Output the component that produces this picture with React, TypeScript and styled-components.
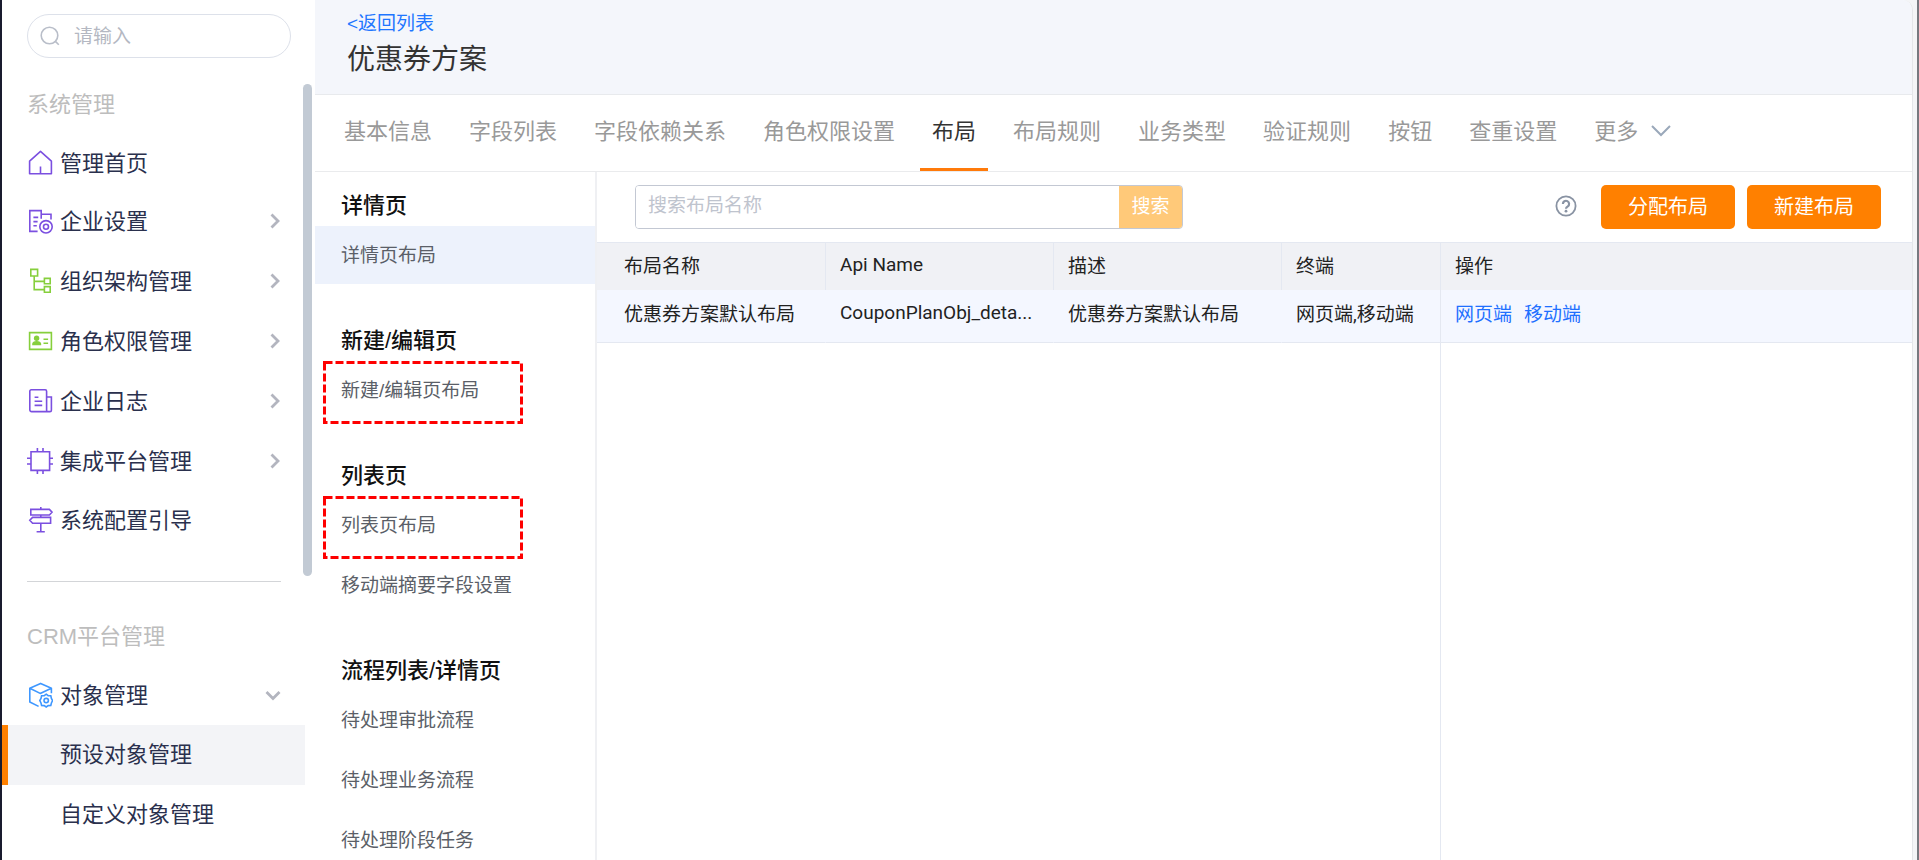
import React from "react";
import styled, { createGlobalStyle } from "styled-components";

const cjk = '"Noto Sans CJK SC", sans-serif';

const GlobalStyle = createGlobalStyle`
  *, *::before, *::after { box-sizing: border-box; }
  body { margin: 0; background: #fff; font-family: "Liberation Sans", ${cjk}; font-weight: 400; color: #333; }
  button, input { font: inherit; color: inherit; margin: 0; }
  button { border: 0; padding: 0; background: none; cursor: pointer; }
  a { text-decoration: none; color: inherit; }
  h1, h2, p, ul { margin: 0; padding: 0; font-weight: inherit; list-style: none; }
`;

const Page = styled.div`
  display: flex;
  min-height: 100vh;
  overflow: hidden;
  border-left: 2px solid #191b2e;
  border-right: 2px solid #77797f;
  background: #f4f5f7;
`;

const Sidebar = styled.aside`
  position: relative;
  flex: 0 0 313px;
  width: 313px;
  min-width: 0;
  padding-top: 14px;
  background: #fff;
`;

const ScrollThumb = styled.div`
  position: absolute;
  top: 84px;
  right: 3px;
  width: 9px;
  height: 492px;
  border-radius: 5px;
  background: #c2cad4;
`;

const SideSearch = styled.label`
  display: flex;
  align-items: center;
  gap: 14px;
  height: 44px;
  margin: 0 24px 0 25px;
  padding: 0 12px;
  border: 1px solid #dde1ea;
  border-radius: 22px;
  color: #b9bec9;

  svg { flex: none; }
  input {
    flex: 1;
    width: 100%;
    min-width: 0;
    border: 0;
    padding: 2px 0 0;
    outline: 0;
    background: none;
    font-size: 19px;
  }
  input::placeholder { color: #b4b8c2; opacity: 1; }
`;

const SideHeading = styled.h2<{ $top: number }>`
  margin-top: ${(p) => p.$top}px;
  padding-left: 25px;
  font-size: 22px;
  line-height: 30px;
  color: #bdbdbd;
`;

const SideList = styled.ul<{ $top: number }>`
  margin-top: ${(p) => p.$top}px;
  padding-right: 10px;
`;

const SideLink = styled.a<{ $plain?: boolean; $nested?: boolean; $active?: boolean }>`
  display: flex;
  align-items: center;
  gap: 7px;
  height: ${(p) => (p.$plain ? 57 : 60)}px;
  padding: 0 24px 0 ${(p) => (p.$nested ? 52 : 19)}px;
  border-left: 6px solid ${(p) => (p.$active ? "#ff8000" : "transparent")};
  background: ${(p) => (p.$active ? "#f3f4f7" : "none")};
  font-size: 22px;
  color: #2a304d;

  span { flex: 1; padding-bottom: ${(p) => (p.$nested ? 6 : 4)}px; }
`;

const Divider = styled.hr`
  height: 1px;
  margin: 33px 34px 0 25px;
  border: 0;
  background: #d3d5d8;
`;

const Main = styled.main`
  display: flex;
  flex: 1;
  flex-direction: column;
  min-width: 0;
  margin-right: 4px;
  border-right: 1px solid #e4e6e9;
  border-top-right-radius: 10px;
  background: #fff;
  overflow: hidden;
`;

const PageHeader = styled.header`
  height: 95px;
  padding: 11px 32px 0;
  border-bottom: 1px solid #e8eaed;
  background: #f4f6fb;
`;

const BackLink = styled.a`
  display: block;
  font-size: 19px;
  line-height: 26px;
  color: #1f76ff;
`;

const Title = styled.h1`
  font-size: 28px;
  line-height: 46px;
  color: #333;
`;

const Tabs = styled.nav`
  display: flex;
  gap: 13px;
  height: 77px;
  padding: 0 17px;
  border-bottom: 1px solid #eaebed;
`;

const Tab = styled.button<{ $active?: boolean }>`
  display: flex;
  align-items: center;
  gap: 13px;
  padding: 0 12px 6px;
  border-bottom: 3px solid ${(p) => (p.$active ? "#ff7a0a" : "transparent")};
  font-size: 22px;
  white-space: nowrap;
  color: ${(p) => (p.$active ? "#333" : "#999")};

  svg { margin-top: 4px; }
`;

const Body = styled.div`
  display: flex;
  flex: 1;
`;

const LayoutNav = styled.nav`
  display: flex;
  flex: 0 0 282px;
  flex-direction: column;
  gap: 39px;
  padding-top: 16px;
  border-right: 2px solid #eff0f3;
`;

const NavHeading = styled.h2`
  padding-left: 26px;
  padding-bottom: 2px;
  font-size: 22px;
  font-weight: 500;
  line-height: 36px;
  color: #111;
`;

const NavItems = styled.ul`
  display: flex;
  flex-direction: column;
  gap: 2px;
`;

const NavItem = styled.a<{ $active?: boolean }>`
  position: relative;
  display: flex;
  align-items: center;
  height: 58px;
  padding: 0 0 4px 26px;
  background: ${(p) => (p.$active ? "#edf2fc" : "none")};
  font-size: 19px;
  color: #5b5f68;
`;

const Marker = styled.svg`
  position: absolute;
  top: 0;
  left: 8px;
  width: 200px;
  height: 63px;
`;

const Content = styled.section`
  display: flex;
  flex: 1;
  flex-direction: column;
  min-width: 0;
`;

const Toolbar = styled.div`
  display: flex;
  align-items: center;
  gap: 12px;
  height: 70px;
  padding: 0 31px 0 38px;
`;

const SearchForm = styled.form`
  display: flex;
  flex: 0 1 548px;
  height: 44px;
  margin-right: auto;
  border: 1px solid #c3c8d3;
  border-radius: 4px;
  overflow: hidden;
  font-size: 19px;

  input {
    flex: 1;
    min-width: 0;
    padding: 0 12px 2px;
    border: 0;
    outline: 0;
  }
  input::placeholder { color: #bfc4ce; opacity: 1; }
  button {
    width: 63px;
    padding-bottom: 5px;
    background: #ffc979;
    color: #fff;
  }
`;

const HelpButton = styled.button`
  display: flex;
  margin: 0 12px 2px 0;
  color: #8993a3;
`;

const PrimaryButton = styled.button`
  width: 134px;
  height: 44px;
  padding-bottom: 3px;
  border-radius: 5px;
  background: #ff8000;
  color: #fff;
  font-size: 20px;
`;

const TableArea = styled.div`
  display: flex;
  flex: 1;
  min-width: 0;
`;

const Table = styled.table`
  width: 100%;
  table-layout: fixed;
  border-collapse: separate;
  border-spacing: 0;
  border-top: 1px solid #e4e8f1;
  font-family: Roboto, ${cjk};
  font-size: 19px;
  color: #222;

  th, td {
    padding: 0 14px 4px;
    border-right: 1px solid #e4e8f1;
    text-align: left;
    white-space: nowrap;
    font-weight: inherit;
  }
  th:first-child, td:first-child { padding-left: 27px; }
  th:last-child, td:last-child { border-right: 0; }
  th { height: 47px; background: #f0f1f5; }
  td { height: 53px; padding-bottom: 8px; border-bottom: 1px solid #e4e8f1; background: #f4f7ff; }
  tbody td:not(:nth-last-child(2)) { border-right-color: transparent; }
  tbody tr:last-child td { height: auto; border-bottom: 0; background: #fff; }
`;

const RowLink = styled.a`
  margin-right: 12px;
  color: #1f70ff;
`;

type IconProps = { color: string; children: React.ReactNode };

const Icon = ({ color, children }: IconProps) => (
  <svg width="26" height="26" viewBox="0 0 26 26" fill="none" stroke={color} strokeWidth="1.6" aria-hidden="true">
    {children}
  </svg>
);

const purple = "#7b4fe0";
const green = "#86cf3c";
const blue = "#3e97ff";

const HomeIcon = () => (
  <Icon color={purple}>
    <path d="M2.6 11.2 13.5 1.4l10.9 9.8v12.5H2.6zM13.5 16.5v7" strokeLinejoin="round" />
  </Icon>
);
const CompanyIcon = () => (
  <Icon color={purple}>
    <path d="M10.6 23.4H2.8V2.6h11.4v8.2M14.2 6.2h9.8v5.4M6.4 9.4h4.8M6.4 13.6h4.2M6.4 17.8h3.4" />
    <circle cx="19" cy="18.8" r="6.2" />
    <circle cx="19" cy="18.8" r="2.5" />
  </Icon>
);
const TreeIcon = () => (
  <Icon color={green}>
    <path d="M3.8 1.4h6.8V8H3.8zM17.4 10.4h5.8v5.4h-5.8zM17.4 18.6h5.8v5.6h-5.8zM7.2 8v13.6h10.2M7.2 13.4h10.2" />
  </Icon>
);
const CardIcon = () => (
  <Icon color={green}>
    <path d="M2.6 4.6h21.8v16.8H2.6zM16.5 11.2h4.6M16.5 15.2h4.6" />
    <g fill={green} stroke="none">
      <circle cx="9.6" cy="10.2" r="2.7" />
      <path d="M5.2 17.2v-1.4c0-1.6 1.8-2.8 4.4-2.8s4.6 1.2 4.6 2.8v1.4z" />
    </g>
  </Icon>
);
const LogIcon = () => (
  <Icon color={purple}>
    <path d="M20.6 23.6H4.6a1.8 1.8 0 0 1-1.8-1.8V3.2c0-.8.6-1.4 1.4-1.4h14c.8 0 1.4.6 1.4 1.4v19c0 .8.6 1.4 1.4 1.4h2c.8 0 1.4-.6 1.4-1.4V9h-4.8M7.6 9.2h3.8M7.6 13.2h7.6M7.6 17.4h7.6" />
  </Icon>
);
const ChipIcon = () => (
  <Icon color={purple}>
    <path d="M4 3.8h18.6v18.6H4zM10.4 0v3.8M16 0v3.8M10.4 22.4V26M16 22.4V26M0 10.2h4M0 16h4M22.6 10.2H26M22.6 16H26" />
  </Icon>
);
const SignIcon = () => (
  <Icon color={purple}>
    <path d="M13.8 0v2.4M3.8 2.4h18.6L25 5.2 22.4 8H3.8zM13.8 8v2.4M5.6 10.4h18v5.8h-18l-2.8-2.9zM13.8 16.2v8.6M9.6 24.8h8.2" />
  </Icon>
);
const CubeIcon = () => (
  <Icon color={blue}>
    <path d="M11.6 24.4 2.8 20V6.2l10.8-4.8 10.8 4.8v5M2.8 6.2l10.4 5.2 11.2-5.2" strokeLinejoin="round" />
    <path d="m19.2 12.2 2 1.4 2.6.2.6 2.6 1.2 2.2-1.2 2.4-.6 2.4-2.6.2-2 1.4-2-1.4-2.6-.2-.6-2.4-1.2-2.4 1.2-2.2.6-2.6 2.6-.2z" />
    <circle cx="19.2" cy="18.6" r="2.2" />
  </Icon>
);
const Chevron = ({ down }: { down?: boolean }) => (
  <svg width="16" height="16" viewBox="0 0 16 16" fill="none" stroke="#b3b5bf" strokeWidth="2.8" aria-hidden="true">
    <path d={down ? "M1.5 5 8 11.5 14.5 5" : "m6.5 1.5 6.5 6.5-6.5 6.5"} />
  </svg>
);

type Entry = { label: string; icon: React.ReactNode; expandable?: boolean };
const systemEntries: Entry[] = [
  { label: "管理首页", icon: <HomeIcon /> },
  { label: "企业设置", icon: <CompanyIcon />, expandable: true },
  { label: "组织架构管理", icon: <TreeIcon />, expandable: true },
  { label: "角色权限管理", icon: <CardIcon />, expandable: true },
  { label: "企业日志", icon: <LogIcon />, expandable: true },
  { label: "集成平台管理", icon: <ChipIcon />, expandable: true },
  { label: "系统配置引导", icon: <SignIcon /> },
];

const tabs = ["基本信息", "字段列表", "字段依赖关系", "角色权限设置", "布局", "布局规则", "业务类型", "验证规则", "按钮", "查重设置"];

type NavGroup = { title: string; items: { label: string; active?: boolean; marked?: boolean }[] };
const groups: NavGroup[] = [
  { title: "详情页", items: [{ label: "详情页布局", active: true }] },
  { title: "新建/编辑页", items: [{ label: "新建/编辑页布局", marked: true }] },
  { title: "列表页", items: [{ label: "列表页布局", marked: true }, { label: "移动端摘要字段设置" }] },
  { title: "流程列表/详情页", items: [{ label: "待处理审批流程" }, { label: "待处理业务流程" }, { label: "待处理阶段任务" }] },
];

export default function App() {
  return (
    <Page>
      <GlobalStyle />
      <Sidebar>
        <SideSearch>
          <svg width="20" height="20" viewBox="0 0 20 20" fill="none" stroke="currentColor" strokeWidth="1.6" aria-hidden="true">
            <circle cx="9.5" cy="9.5" r="8.3" />
            <path d="m15.4 15.4 3.4 3.4" />
          </svg>
          <input type="text" placeholder="请输入" aria-label="请输入" />
        </SideSearch>
        <SideHeading $top={32}>系统管理</SideHeading>
        <SideList $top={14}>
          {systemEntries.map((e) => (
            <li key={e.label}>
              <SideLink href="#" $plain={!e.expandable}>
                {e.icon}
                <span>{e.label}</span>
                {e.expandable && <Chevron />}
              </SideLink>
            </li>
          ))}
        </SideList>
        <Divider />
        <SideHeading $top={40}>CRM平台管理</SideHeading>
        <SideList $top={13}>
          <li>
            <SideLink href="#">
              <CubeIcon />
              <span>对象管理</span>
              <Chevron down />
            </SideLink>
          </li>
          <li><SideLink href="#" $nested $active><span>预设对象管理</span></SideLink></li>
          <li><SideLink href="#" $nested><span>自定义对象管理</span></SideLink></li>
        </SideList>
        <ScrollThumb />
      </Sidebar>
      <Main>
        <PageHeader>
          <BackLink href="#">&lt;返回列表</BackLink>
          <Title>优惠券方案</Title>
        </PageHeader>
        <Tabs>
          {tabs.map((t) => (
            <Tab key={t} type="button" $active={t === "布局"}>{t}</Tab>
          ))}
          <Tab type="button">
            更多
            <svg width="20" height="12" viewBox="0 0 20 12" fill="none" stroke="#9aa8ba" strokeWidth="2" aria-hidden="true">
              <path d="m1 1 9 9 9-9" />
            </svg>
          </Tab>
        </Tabs>
        <Body>
          <LayoutNav>
            {groups.map((g) => (
              <div key={g.title}>
                <NavHeading>{g.title}</NavHeading>
                <NavItems>
                  {g.items.map((i) => (
                    <li key={i.label}>
                      <NavItem href="#" $active={i.active}>
                        {i.label}
                        {i.marked && (
                          <Marker viewBox="0 0 200 63" fill="none" stroke="#fe0000" strokeWidth="3" strokeDasharray="8 3" aria-hidden="true">
                            <rect x="1.5" y="1.5" width="197" height="60" />
                          </Marker>
                        )}
                      </NavItem>
                    </li>
                  ))}
                </NavItems>
              </div>
            ))}
          </LayoutNav>
          <Content>
            <Toolbar>
              <SearchForm onSubmit={(e) => e.preventDefault()}>
                <input type="text" placeholder="搜索布局名称" aria-label="搜索布局名称" />
                <button type="submit">搜索</button>
              </SearchForm>
              <HelpButton type="button" aria-label="帮助">
                <svg width="22" height="22" viewBox="0 0 22 22" fill="none" stroke="currentColor" strokeWidth="1.8" aria-hidden="true">
                  <circle cx="11" cy="11" r="9.6" />
                  <path d="M7.9 8.9a3.1 3.1 0 1 1 4.9 2.5c-1.2.8-1.8 1.2-1.8 2.4" strokeWidth="2.2" />
                  <circle cx="11" cy="16.2" r="1.4" fill="currentColor" stroke="none" />
                </svg>
              </HelpButton>
              <PrimaryButton type="button">分配布局</PrimaryButton>
              <PrimaryButton type="button">新建布局</PrimaryButton>
            </Toolbar>
            <TableArea>
              <Table>
                <colgroup>
                  <col style={{ width: "229px" }} />
                  <col style={{ width: "228px" }} />
                  <col style={{ width: "228px" }} />
                  <col style={{ width: "159px" }} />
                  <col />
                </colgroup>
                <thead>
                  <tr>
                    <th>布局名称</th>
                    <th>Api Name</th>
                    <th>描述</th>
                    <th>终端</th>
                    <th>操作</th>
                  </tr>
                </thead>
                <tbody>
                  <tr>
                    <td>优惠券方案默认布局</td>
                    <td>CouponPlanObj_deta...</td>
                    <td>优惠券方案默认布局</td>
                    <td>网页端,移动端</td>
                    <td>
                      <RowLink href="#">网页端</RowLink>
                      <RowLink href="#">移动端</RowLink>
                    </td>
                  </tr>
                  <tr aria-hidden="true">
                    <td />
                    <td />
                    <td />
                    <td />
                    <td />
                  </tr>
                </tbody>
              </Table>
            </TableArea>
          </Content>
        </Body>
      </Main>
    </Page>
  );
}
